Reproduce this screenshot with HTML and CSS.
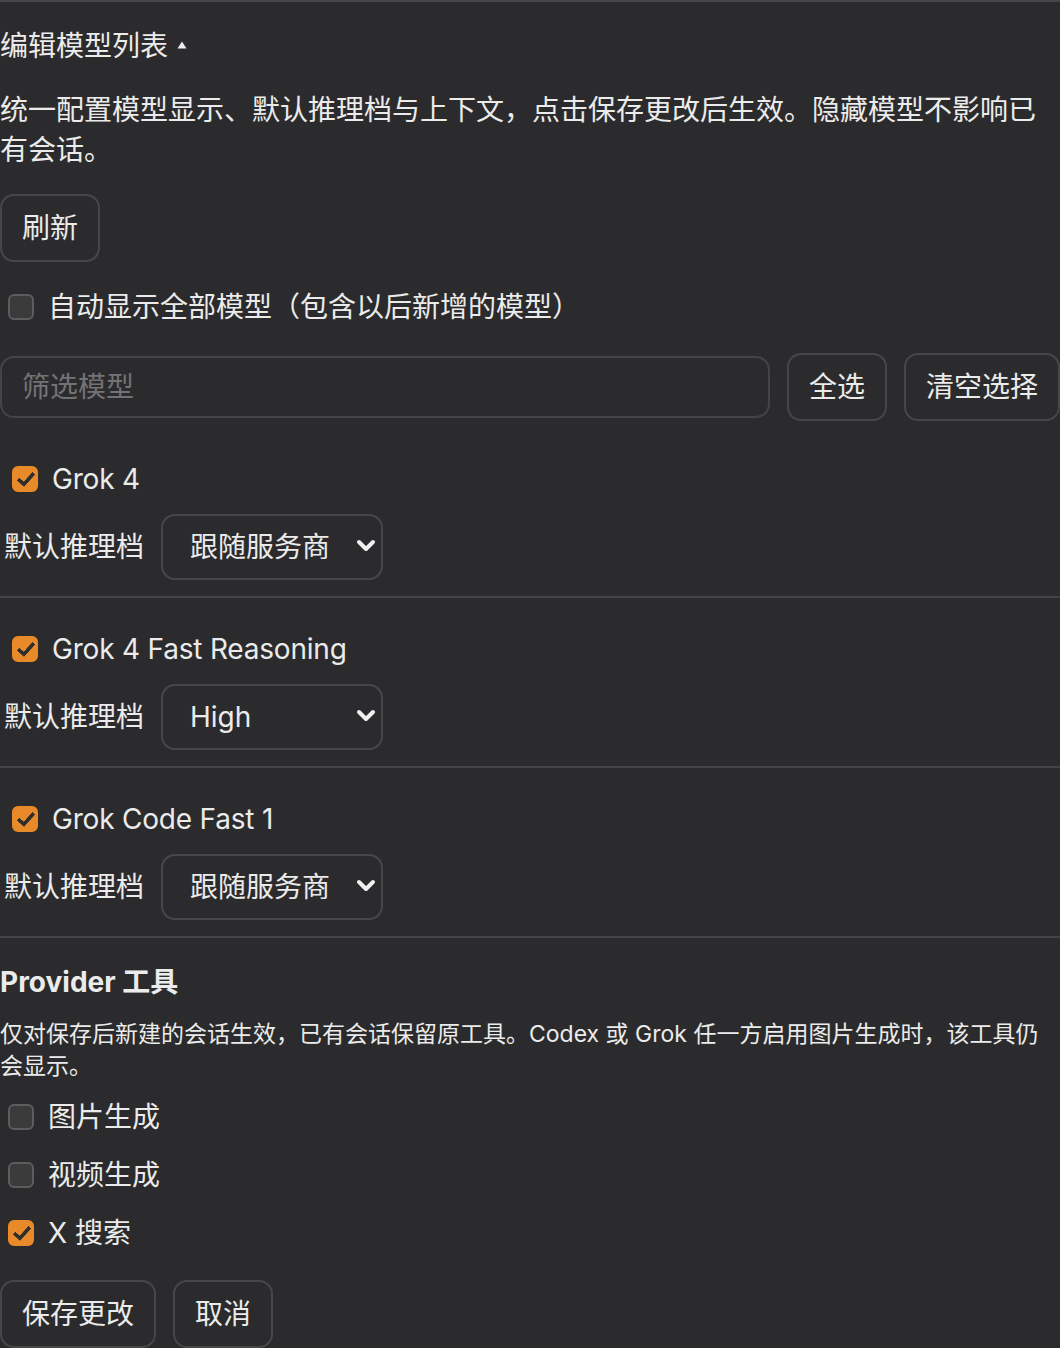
FILE: index.html
```html
<!DOCTYPE html>
<html lang="zh-CN">
<head>
<meta charset="utf-8">
<title>编辑模型列表</title>
<link rel="stylesheet" href="styles.css">
</head>
<body>
<section class="panel">
  <div class="title">编辑模型列表 <svg class="caret" width="10" height="8" viewBox="0 0 10 8"><path d="M5 0.5 L9.5 7.5 L0.5 7.5 Z" fill="#ececec"/></svg></div>
  <p class="desc">统一配置模型显示、默认推理档与上下文，点击保存更改后生效。隐藏模型不影响已有会话。</p>
  <div class="refresh-row"><button class="btn" type="button">刷新</button></div>

  <label class="check-row auto-row"><input class="check" type="checkbox"><span class="auto-label">自动显示全部模型（包含以后新增的模型）</span></label>

  <div class="filter-row">
    <input class="filter" type="text" placeholder="筛选模型">
    <button class="btn" type="button">全选</button>
    <button class="btn" type="button">清空选择</button>
  </div>

  <div class="model-list">
    <div class="model-item">
      <label class="model-head"><input class="check" type="checkbox" checked><span>Grok 4</span></label>
      <div class="effort-row">
        <span class="effort-label">默认推理档</span>
        <div class="select-wrap">
          <select class="select"><option>跟随服务商</option><option>High</option><option>Low</option></select>
          <svg class="chevron" width="20" height="14" viewBox="0 0 20 14"><path d="M3 3 L10 10 L17 3" fill="none" stroke="#f0f0f0" stroke-width="4" stroke-linecap="round" stroke-linejoin="round"/></svg>
        </div>
      </div>
    </div>
    <div class="model-item">
      <label class="model-head"><input class="check" type="checkbox" checked><span>Grok 4 Fast Reasoning</span></label>
      <div class="effort-row">
        <span class="effort-label">默认推理档</span>
        <div class="select-wrap">
          <select class="select"><option>High</option><option>跟随服务商</option><option>Low</option></select>
          <svg class="chevron" width="20" height="14" viewBox="0 0 20 14"><path d="M3 3 L10 10 L17 3" fill="none" stroke="#f0f0f0" stroke-width="4" stroke-linecap="round" stroke-linejoin="round"/></svg>
        </div>
      </div>
    </div>
    <div class="model-item">
      <label class="model-head"><input class="check" type="checkbox" checked><span>Grok Code Fast 1</span></label>
      <div class="effort-row">
        <span class="effort-label">默认推理档</span>
        <div class="select-wrap">
          <select class="select"><option>跟随服务商</option><option>High</option><option>Low</option></select>
          <svg class="chevron" width="20" height="14" viewBox="0 0 20 14"><path d="M3 3 L10 10 L17 3" fill="none" stroke="#f0f0f0" stroke-width="4" stroke-linecap="round" stroke-linejoin="round"/></svg>
        </div>
      </div>
    </div>
  </div>

  <h3 class="tools-title">Provider 工具</h3>
  <p class="tools-note">仅对保存后新建的会话生效，已有会话保留原工具。Codex 或 Grok 任一方启用图片生成时，该工具仍会显示。</p>
  <div class="tool-list">
    <label class="check-row"><input class="check" type="checkbox"><span>图片生成</span></label>
    <label class="check-row"><input class="check" type="checkbox"><span>视频生成</span></label>
    <label class="check-row"><input class="check" type="checkbox" checked><span>X 搜索</span></label>
  </div>

  <div class="actions">
    <button class="btn" type="button">保存更改</button>
    <button class="btn" type="button">取消</button>
  </div>
</section>
</body>
</html>
```

FILE: styles.css
```css
html, body {
  margin: 0;
  padding: 0;
  background: #2b2b2d;
}

body {
  font-family: Inter, "Noto Sans CJK SC", sans-serif;
  font-size: 28px;
  line-height: 40px;
  color: #ebebeb;
}

.panel {
  border-top: 2px solid #464648;
  padding-top: 24px;
  display: flex;
  flex-direction: column;
}

.title {
  display: flex;
  align-items: center;
  gap: 9px;
  height: 40px;
}

.caret {
  margin-top: -2px;
}

.desc {
  margin: 24px 0 0;
}

.refresh-row {
  margin-top: 24px;
  display: flex;
}

/* buttons and text fields share the same outline */
.btn {
  font: inherit;
  color: inherit;
  background: transparent;
  border: 2px solid #474749;
  border-radius: 14px;
  padding: 12px 20px;
  line-height: 40px;
  cursor: pointer;
}

.check-row {
  display: flex;
  align-items: center;
  gap: 14px;
  height: 40px;
}

.auto-row {
  margin-top: 25px;
}

.check {
  appearance: none;
  -webkit-appearance: none;
  position: relative;
  flex: none;
  box-sizing: border-box;
  width: 26px;
  height: 26px;
  margin: 0 0 0 8px;
  border: 2px solid #5d5d5f;
  border-radius: 6px;
  background: #3b3b3c;
}

.check:checked {
  background: #e8892a;
  border-color: #e8892a;
}

.check:checked::after {
  content: "";
  position: absolute;
  left: 7px;
  top: 1px;
  width: 6px;
  height: 13px;
  border: solid #2e2e2e;
  border-width: 0 4px 4px 0;
  border-radius: 1px;
  transform: rotate(42deg);
}

.filter-row {
  margin-top: 26px;
  display: flex;
  align-items: center;
  gap: 17px;
}

.filter {
  flex: 1;
  min-width: 0;
  box-sizing: border-box;
  height: 62px;
  padding: 0 20px;
  font: inherit;
  color: inherit;
  background: transparent;
  border: 2px solid #444446;
  border-radius: 14px;
  outline: none;
}

.filter::placeholder {
  color: #737375;
}

.model-list {
  margin-top: 7px;
}

.model-item {
  padding: 31px 4px 16px;
  border-bottom: 2px solid #444446;
}

.model-head {
  display: flex;
  align-items: center;
  gap: 14px;
  height: 40px;
  letter-spacing: -0.2px;
}

.effort-row {
  margin-top: 15px;
  display: flex;
  align-items: center;
  gap: 17px;
}

.select-wrap {
  position: relative;
  width: 222px;
}

.select {
  appearance: none;
  -webkit-appearance: none;
  box-sizing: border-box;
  width: 100%;
  height: 66px;
  padding: 0 40px 0 27px;
  font: inherit;
  color: inherit;
  background: transparent;
  border: 2px solid #474749;
  border-radius: 14px;
  outline: none;
}

.chevron {
  position: absolute;
  right: 7px;
  top: 50%;
  margin-top: -8px;
  pointer-events: none;
}

.tools-title {
  margin: 24px 0 0;
  font-size: 28px;
  line-height: 40px;
  font-weight: 700;
}

.tools-note {
  margin: 16px 0 0;
  font-size: 23px;
  line-height: 32px;
}

.tool-list {
  margin-top: 15px;
  display: flex;
  flex-direction: column;
  gap: 18px;
}

.actions {
  margin-top: 27px;
  display: flex;
  gap: 17px;
}
```
